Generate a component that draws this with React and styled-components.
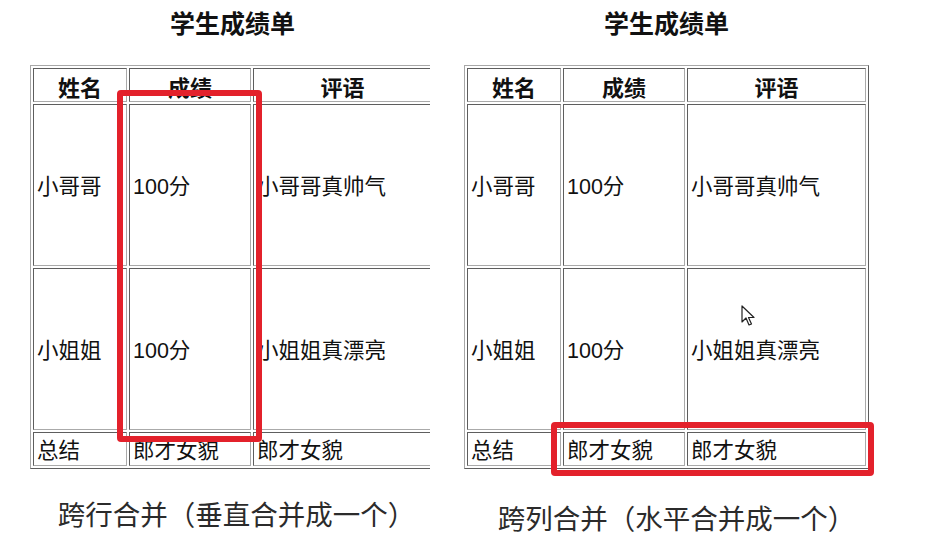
import React from 'react';
import styled, { createGlobalStyle } from 'styled-components';

const GlobalStyle = createGlobalStyle`
  body {
    margin: 0;
    background: #ffffff;
    font-family: "Noto Sans CJK SC", "Noto Sans", sans-serif;
  }
`;

const Page = styled.div`
  display: flex;
  width: 933px;
  height: 545px;
  overflow: hidden;
  background: #ffffff;
`;

const Panel = styled.div`
  position: relative;
  flex: none;
  width: ${props => props.width || 'auto'};
  padding-left: ${props => props.padLeft || 0}px;
  margin-left: ${props => props.gapLeft || 0}px;
  overflow: ${props => (props.clip ? 'hidden' : 'visible')};
`;

const Column = styled.div`
  display: flex;
  flex-direction: column;
  align-items: center;
  width: 405px;
`;

const Title = styled.h2`
  margin: 0 0 21px;
  height: 44px;
  line-height: 44px;
  font-size: 25px;
  font-weight: 700;
  color: #111;
`;

const Table = styled.table`
  width: 405px;
  border-collapse: separate;
  border-spacing: 2px;
  border: 1px solid;
  border-color: #a8a8a8 #5e5e5e #5e5e5e #a8a8a8;
  table-layout: fixed;
`;

const Cell = styled.td`
  box-sizing: border-box;
  height: ${props => props.h}px;
  padding: 3px 2px 0 3px;
  border: 1px solid;
  border-color: #5e5e5e #aaaaaa #aaaaaa #5e5e5e;
  font-family: "Liberation Sans", "Noto Sans CJK SC", sans-serif;
  font-size: 21.5px;
  line-height: 24px;
  color: #111;
  text-align: left;
  vertical-align: middle;
  white-space: nowrap;
`;

const Head = styled(Cell).attrs({ as: 'th' })`
  padding: 2px 0 0;
  font-family: "Noto Sans CJK SC", sans-serif;
  font-size: 22px;
  font-weight: 700;
  text-align: center;
`;

const Caption = styled.div`
  margin-top: ${props => props.top}px;
  padding-left: ${props => props.shift}px;
  line-height: 40px;
  font-size: 27.5px;
  color: #2b2b2b;
  white-space: nowrap;
`;

const Highlight = styled.div`
  position: absolute;
  left: ${props => props.x}px;
  top: ${props => props.y}px;
  width: ${props => props.w}px;
  height: ${props => props.h}px;
  box-sizing: border-box;
  border: 6px solid #e3212b;
  border-radius: 4px;
  pointer-events: none;
`;

const Cursor = styled.svg`
  position: absolute;
  left: 277px;
  top: 305px;
`;

const rows = [
  ['小哥哥', '100分', '小哥哥真帅气'],
  ['小姐姐', '100分', '小姐姐真漂亮'],
];

const ScoreTable = () => (
  <Table>
    <colgroup>
      <col style={{ width: 94 }} />
      <col style={{ width: 122 }} />
      <col style={{ width: 179 }} />
    </colgroup>
    <tbody>
      <tr>
        <Head h={34}>姓名</Head>
        <Head h={34}>成绩</Head>
        <Head h={34}>评语</Head>
      </tr>
      {rows.map(r => (
        <tr key={r[0]}>
          {r.map(c => (
            <Cell key={c} h={162}>{c}</Cell>
          ))}
        </tr>
      ))}
      <tr>
        <Cell h={34}>总结</Cell>
        <Cell h={34}>郎才女貌</Cell>
        <Cell h={34}>郎才女貌</Cell>
      </tr>
    </tbody>
  </Table>
);

const App = () => (
  <>
    <GlobalStyle />
    <Page>
      <Panel width="400px" padLeft={30} clip>
        <Column>
          <Title>学生成绩单</Title>
          <ScoreTable />
          <Caption top={24} shift={8}>跨行合并（垂直合并成一个）</Caption>
        </Column>
        <Highlight x={117} y={90} w={145} h={352} />
      </Panel>
      <Panel gapLeft={34}>
        <Column>
          <Title>学生成绩单</Title>
          <ScoreTable />
          <Caption top={28} shift={20}>跨列合并（水平合并成一个）</Caption>
        </Column>
        <Highlight x={87} y={422} w={323} h={54} />
        <Cursor width="14" height="22" viewBox="0 0 14 22">
          <path d="M1 1 L1 17 L5 13 L8 20 L10.5 19 L7.5 12.5 L13 12.5 Z" fill="#fff" stroke="#222" strokeWidth="1.2" strokeLinejoin="round" />
        </Cursor>
      </Panel>
    </Page>
  </>
);

export default App;
